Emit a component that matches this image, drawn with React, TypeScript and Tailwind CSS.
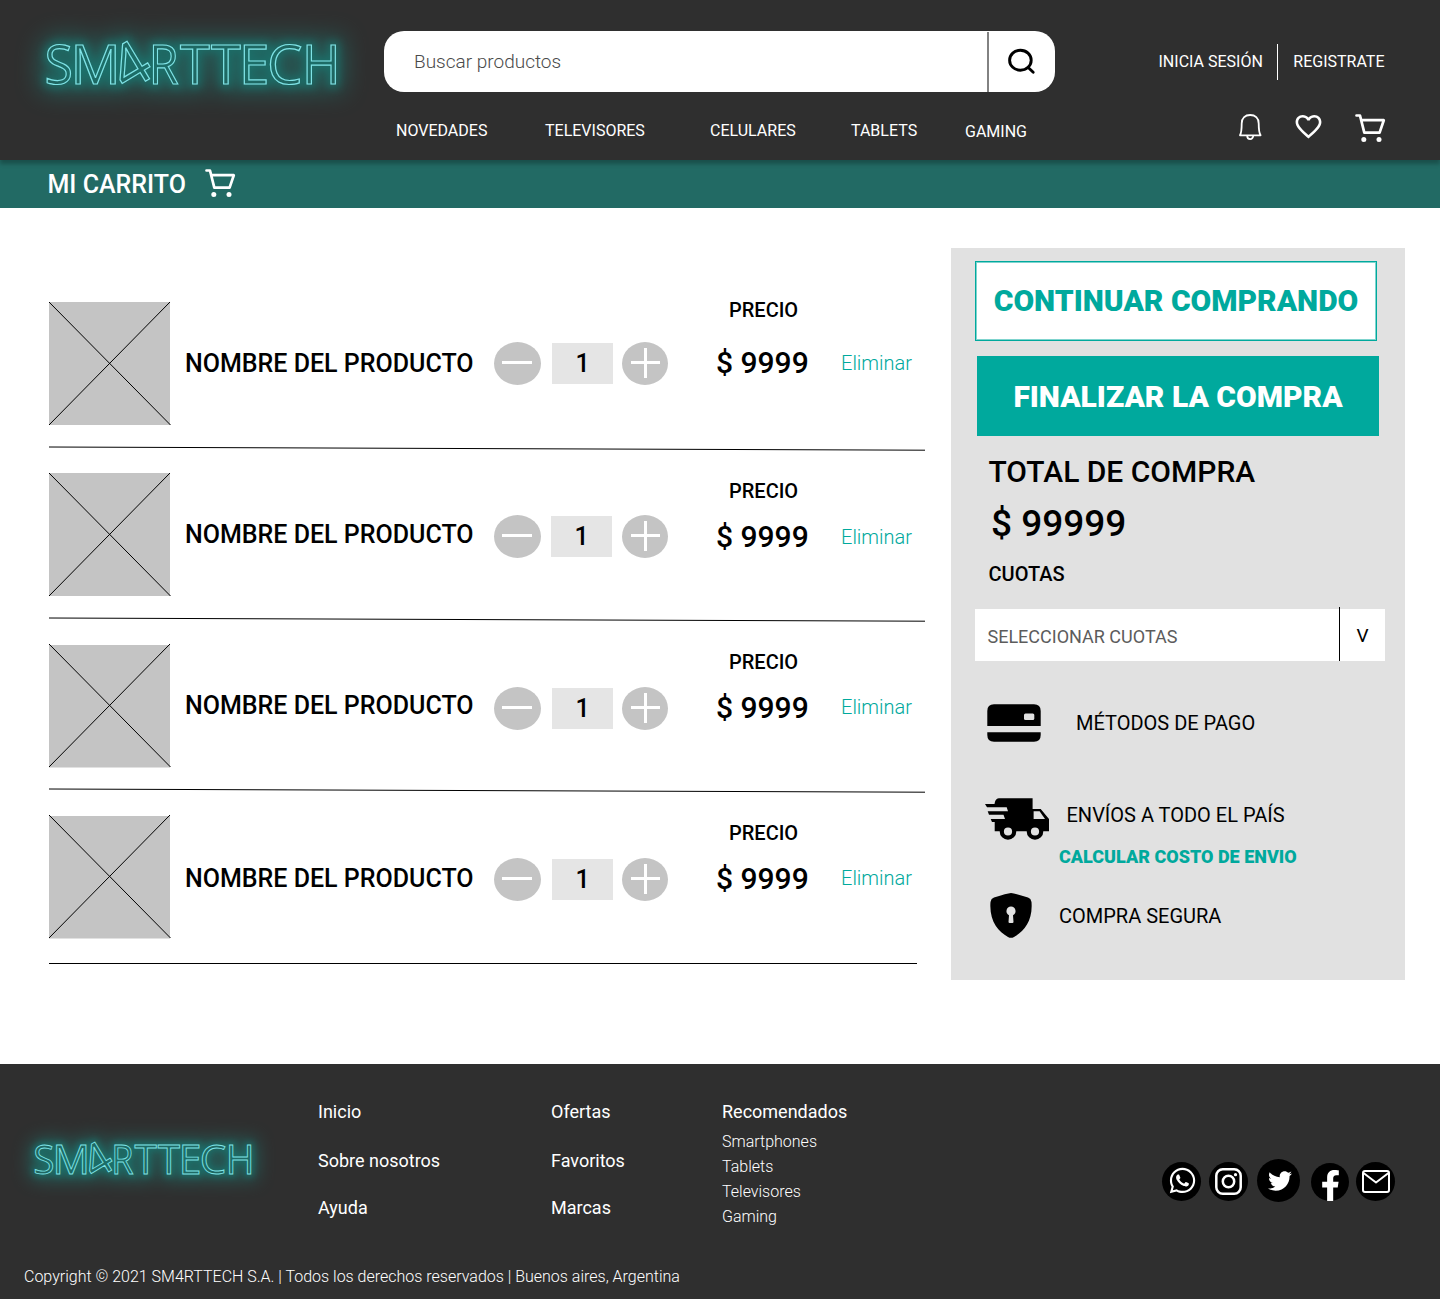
import { FaFacebookF, FaTwitter, FaWhatsapp } from "react-icons/fa";
import { MdFavoriteBorder } from "react-icons/md";

const LETTERS = [
  { ch: "S", size: 54.7, at: "translate(44.4 83.6) scale(0.95 1)" },
  { ch: "M", size: 54.7, at: "translate(70.4 83.6) scale(1.02 1)" },
  { ch: "4", size: 61, at: "translate(126.2 92.8) rotate(-31)" },
  { ch: "R", size: 54.7, at: "translate(148.8 83.6) scale(0.883 1)" },
  { ch: "T", size: 54.7, at: "translate(180 83.6) scale(0.99 1)" },
  { ch: "T", size: 54.7, at: "translate(211 83.6) scale(0.99 1)" },
  { ch: "E", size: 54.7, at: "translate(239.1 83.6)" },
  { ch: "C", size: 54.7, at: "translate(267.1 83.6) scale(1.03 1)" },
  { ch: "H", size: 54.7, at: "translate(302.1 83.6) scale(0.955 1)" },
];

function Letters() {
  return (
    <>
      {LETTERS.map((l, i) => (
        <text key={i} transform={l.at} fontSize={l.size} fontFamily="'Open Sans', sans-serif">
          {l.ch}
        </text>
      ))}
    </>
  );
}

function Logo({ className }: { className: string }) {
  return (
    <svg viewBox="0 0 384 128" className={`overflow-visible ${className}`} role="img" aria-label="SM4RTTECH">
      <g aria-hidden="true" fill="#1b8a82" stroke="#1b8a82" strokeWidth="16" opacity="0.5" className="[filter:blur(12px)]">
        <Letters />
      </g>
      <g aria-hidden="true" fill="#167d76" stroke="#167d76" strokeWidth="8" opacity="0.6" className="[filter:blur(4px)]">
        <Letters />
      </g>
      <g fill="none" stroke="#7fe3e6" strokeWidth="1.2">
        <Letters />
      </g>
    </svg>
  );
}

function CartIcon() {
  return (
    <svg width="31" height="29" viewBox="0 0 31 29" fill="none" stroke="#fff" strokeWidth="2.7" strokeLinecap="round" strokeLinejoin="round">
      <path d="M1.5 1.5H5L9.3 18.6H24.6L28.8 6.2H6.4" />
      <circle cx="8.8" cy="25.4" r="2.5" fill="#fff" stroke="none" />
      <circle cx="24" cy="25.4" r="2.5" fill="#fff" stroke="none" />
    </svg>
  );
}

function BellIcon() {
  return (
    <svg width="23" height="27" viewBox="0 0 23 27" fill="none" stroke="#fff" strokeWidth="1.8" strokeLinejoin="round">
      <path d="M1 21.3C2.6 18.5 2.7 15 2.7 9.5C2.7 4 6.3 1 11.2 1S19.7 4 19.7 9.5C19.7 15 19.8 18.5 21.6 21.3Z" />
      <path d="M8.2 21.8a3 3.3 0 0 0 6 0" />
    </svg>
  );
}

function Header() {
  return (
    <header className="relative z-10 flex h-40 bg-[#2f2f2f] text-base leading-5 text-white shadow-[0_4px_4px_rgba(0,0,0,0.25)]">
      <Logo className="h-32 w-96 shrink-0" />
      <div className="relative w-[671px] shrink-0 pt-[31px]">
        <div className="flex h-[61px] rounded-[20px] bg-white">
          <div className="w-[603px] pt-[19px] pl-[30px] text-[19px] leading-6 font-light text-[#4a4a4a]">Buscar productos</div>
          <div className="mt-px w-0.5 bg-[#828282]" />
          <svg width="28" height="27" viewBox="0 0 28 27" className="mt-[17px] ml-[19px]" fill="none" stroke="#000" strokeWidth="2.9" strokeLinecap="round">
            <ellipse cx="12.4" cy="12.2" rx="10.8" ry="10" />
            <path d="M20.2 19.5L25.2 24.2" />
          </svg>
        </div>
        <nav className="flex pt-[29px] pl-3 whitespace-nowrap">
          <span className="w-[149px]">NOVEDADES</span>
          <span className="w-[165px]">TELEVISORES</span>
          <span className="w-[141px]">CELULARES</span>
          <span className="w-[114px]">TABLETS</span>
          <span className="pt-px">GAMING</span>
        </nav>
      </div>
      <div className="ml-auto w-[282px] pt-11 pr-[54px]">
        <div className="flex h-9 items-center justify-end pr-[1.5px] whitespace-nowrap">
          <span className="pr-3.5">INICIA SESIÓN</span>
          <span className="mr-[15.5px] h-full w-px bg-white" />
          <span>REGISTRATE</span>
        </div>
        <div className="mt-[33.5px] flex items-start justify-end">
          <BellIcon />
          <MdFavoriteBorder size={31} className="-mt-[3px] ml-[31px]" />
          <div className="ml-[31px]">
            <CartIcon />
          </div>
        </div>
      </div>
    </header>
  );
}

type Row = {
  imageTop: number;
  name: string;
  qty: string;
  value: string;
  precio: string;
  price: string;
  remove: string;
};

const ROWS: Row[] = [
  { imageTop: 0, name: "mt-[47px]", qty: "mt-10", value: "mr-[9px] ml-[11px]", precio: "mt-[-7px]", price: "mt-[23px]", remove: "mt-[46px]" },
  { imageTop: 0, name: "mt-[47px]", qty: "mt-[42px]", value: "mr-2.5 ml-2.5", precio: "mt-[3px]", price: "mt-4", remove: "mt-[49px]" },
  { imageTop: 1, name: "mt-[47px]", qty: "mt-[43px]", value: "mr-[9px] ml-[11px]", precio: "mt-[3px]", price: "mt-4", remove: "mt-12" },
  { imageTop: 1, name: "mt-[49px]", qty: "mt-[43px]", value: "mr-[9px] ml-[11px]", precio: "mt-[3px]", price: "mt-4", remove: "mt-12" },
];

function ProductRow({ row, last }: { row: Row; last: boolean }) {
  return (
    <article className="relative h-[171px] w-[876px]">
      <div className="flex items-start whitespace-nowrap">
        <svg width="122" height="124" viewBox="0 0 122 124" className="shrink-0 overflow-visible">
          <rect y={row.imageTop} width="121" height={row.imageTop ? 122.5 : 123} fill="#c4c4c4" />
          <path d="M0 0L121.5 123M121 0L0 123" stroke="#000" strokeWidth="1" />
        </svg>
        <div className={`ml-3.5 w-[309px] text-[25px] leading-[30px] font-medium ${row.name}`}>NOMBRE DEL PRODUCTO</div>
        <Stepper row={row} />
        <div className="ml-[48px] w-[125px] font-medium">
          <div className={`pl-[13px] text-xl leading-[30px] ${row.precio}`}>PRECIO</div>
          <div className={`text-[30px] leading-[30px] ${row.price}`}>$ 9999</div>
        </div>
        <div className={`text-xl leading-[30px] font-light text-[#00a99d] ${row.remove}`}>Eliminar</div>
      </div>
      <svg width="876" height="6" viewBox="0 0 876 6" className="absolute top-[144px] left-0" stroke="#000">
        {last ? <path d="M0 4.5H868" /> : <path d="M0 1L876 4.2" />}
      </svg>
    </article>
  );
}

function Stepper({ row }: { row: Row }) {
  return (
    <div className={`flex w-[174px] shrink-0 items-start ${row.qty}`}>
      <svg width="47" height="43" viewBox="0 0 47 43">
        <ellipse cx="23.5" cy="21.5" rx="23.5" ry="21.5" fill="#c4c4c4" />
        <path d="M8 20.5H38" stroke="#fff" strokeWidth="3" />
      </svg>
      <div className={`mt-px h-[41px] w-[61px] bg-[#e5e5e5] text-center text-[25px] leading-[42px] font-medium ${row.value}`}>1</div>
      <svg width="46" height="43" viewBox="0 0 46 43">
        <ellipse cx="23" cy="21.5" rx="23" ry="21.5" fill="#c4c4c4" />
        <path d="M9 20.5H38M23.5 6V36" stroke="#fff" strokeWidth="3" />
      </svg>
    </div>
  );
}

function CardIcon() {
  return (
    <svg width="54" height="38" viewBox="0 0 54 38">
      <path d="M.3 22V7Q.3 .3 7 .3H47Q53.7 .3 53.7 7V22ZM.3 28.3H53.7V31Q53.7 37.8 47 37.8H7Q.3 37.8 .3 31Z" />
      <rect x="37" y="9.5" width="10.3" height="6.5" rx="1.5" fill="#e1e1e1" />
    </svg>
  );
}

function TruckIcon() {
  return (
    <svg width="64" height="42" viewBox="0 0 64 42">
      <path d="M14 .3H47.6V11H55.7L64 21V33.3H9.7V24H7L5.7 21H20L18.5 16.7H4L2.7 13.3H23L21.7 9.3H2L0 6H9.5L10 3.8Q11 .3 14 .3Z" />
      <path d="M48.6 13.2H54.6L60 21H48.6Z" fill="#e1e1e1" />
      <circle cx="23" cy="33.5" r="6.2" fill="#e1e1e1" stroke="#000" strokeWidth="4.2" />
      <circle cx="50" cy="33.5" r="6.2" fill="#e1e1e1" stroke="#000" strokeWidth="4.2" />
    </svg>
  );
}

function ShieldIcon() {
  return (
    <svg width="42" height="45" viewBox="0 0 42 45">
      <path d="M21 0Q25 .3 38 4.6Q41 5.6 41.5 9C43 28 34 38.5 24 44Q21 45.7 18 44C8 38.5 -1 28 .5 9Q1 5.6 4 4.6Q17 .3 21 0Z" />
      <path d="M21 13.5a4.6 4.6 0 0 1 2 8.7L23.5 29Q23.4 30 22.4 30H19.6Q18.6 30 18.5 29L19 22.2a4.6 4.6 0 0 1 2-8.7Z" fill="#e1e1e1" />
    </svg>
  );
}

function Summary() {
  return (
    <aside className="h-[732px] w-[454px] shrink-0 bg-[#e1e1e1] whitespace-nowrap">
      <div className="mt-[13px] ml-6 h-20 w-[402px] border border-[#00a99d] bg-white text-center text-[30px] leading-[77px] font-black text-[#00a99d] shadow-[inset_0_0_0_1px_rgba(0,169,157,0.5)]">
        CONTINUAR COMPRANDO
      </div>
      <div className="mt-[15px] ml-[26px] h-20 w-[402px] bg-[#00a99d] text-center text-[30px] leading-[81px] font-black text-white">
        FINALIZAR LA COMPRA
      </div>
      <div className="mt-[18px] ml-[37.5px] text-[30px] leading-9 font-medium">TOTAL DE COMPRA</div>
      <div className="mt-3 ml-10 text-[37px] leading-11 font-medium">$ 99999</div>
      <div className="mt-4 ml-[37.5px] text-xl leading-6 font-medium">CUOTAS</div>
      <div className="mt-[21px] ml-6 flex h-[54px] w-[410px] items-end">
        <div className="h-[52px] w-[364px] bg-white pt-px pl-[12.5px] text-lg leading-[54px] text-[#5c5c5c]">SELECCIONAR CUOTAS</div>
        <div className="h-full w-px bg-black" />
        <div className="h-[52px] w-[45px] bg-white text-center text-[19px] leading-[53px]">V</div>
      </div>
      <div className="mt-[43px] ml-9 flex text-xl leading-[38px]">
        <CardIcon />
        <span className="ml-[35px]">MÉTODOS DE PAGO</span>
      </div>
      <div className="mt-14 ml-[34px] flex text-xl">
        <TruckIcon />
        <div className="ml-[10px]">
          <div className="pt-1 pl-[7.5px] leading-[26px]">ENVÍOS A TODO EL PAÍS</div>
          <div className="mt-4 text-lg leading-[26px] font-black text-[#00a99d]">CALCULAR COSTO DE ENVIO</div>
        </div>
      </div>
      <div className="mt-[23px] ml-[39px] flex text-xl leading-[46px]">
        <ShieldIcon />
        <span className="ml-[27px]">COMPRA SEGURA</span>
      </div>
    </aside>
  );
}

function Footer() {
  return (
    <footer className="h-[235px] bg-[#2f2f2f] text-lg leading-6 whitespace-nowrap text-white">
      <div className="flex h-[200px]">
        <Logo className="mt-[46.5px] h-24 w-[287px] shrink-0" />
        <div className="relative ml-[31px] w-[233px] pt-9">
          <div>Inicio</div>
          <div className="mt-[25px]">Sobre nosotros</div>
          <div className="mt-[23px]">Ayuda</div>
        </div>
        <div className="w-[171px] pt-9">
          <div>Ofertas</div>
          <div className="mt-[25px]">Favoritos</div>
          <div className="mt-[23px]">Marcas</div>
        </div>
        <div className="w-[200px] pt-9">
          <div>Recomendados</div>
          <div className="mt-[5px] text-base leading-[25px] font-light">
            <div>Smartphones</div>
            <div>Tablets</div>
            <div>Televisores</div>
            <div>Gaming</div>
          </div>
        </div>
        <div className="ml-auto flex items-start pt-[95px] pr-[45px]">
          <span className="mt-[3px] flex size-[39px] items-center justify-center rounded-full bg-black">
            <FaWhatsapp size={29} className="mb-[3px] ml-px" />
          </span>
          <span className="mt-[3px] ml-2 flex size-[39px] items-center justify-center rounded-full bg-black">
            <svg width="27" height="27" viewBox="0 0 27 27" fill="none" stroke="#fff" strokeWidth="2.5">
              <rect x="1.3" y="1.3" width="24.4" height="24.4" rx="6.5" />
              <circle cx="13.5" cy="13.5" r="5.7" />
              <circle cx="20.5" cy="6.7" r="1.6" fill="#fff" stroke="none" />
            </svg>
          </span>
          <span className="ml-[9px] flex size-[43px] items-center justify-center rounded-full bg-black">
            <FaTwitter size={24} className="ml-0.5" />
          </span>
          <span className="mt-1 ml-[11px] flex size-[38px] items-end justify-center rounded-full bg-black">
            <FaFacebookF size={31} className="ml-px" />
          </span>
          <span className="mt-[3px] ml-[7px] flex size-[39px] items-center justify-center rounded-full bg-black">
            <svg width="28" height="23" viewBox="0 0 28 23" fill="none" stroke="#fff" strokeWidth="2" strokeLinejoin="round">
              <rect x="1" y="1" width="26" height="21" rx="2" />
              <path d="M1.5 3L14 12.5L26.5 3" />
            </svg>
          </span>
        </div>
      </div>
      <div className="pl-6 text-base leading-[26px] font-light">Copyright © 2021 SM4RTTECH S.A. | Todos los derechos reservados | Buenos aires, Argentina</div>
    </footer>
  );
}

export default function App() {
  return (
    <div className="h-[1299px] w-[1440px] overflow-hidden bg-white font-['Roboto',sans-serif] text-black">
      <Header />
      <div className="flex h-12 items-start bg-[#226a64] pt-[9px] pl-[47.5px] text-white">
        <h1 className="w-[157.5px] text-[25px] leading-[31px] font-medium whitespace-nowrap">MI CARRITO</h1>
        <CartIcon />
      </div>
      <main className="flex h-[856px] pt-10 pl-[49px]">
        <section className="w-[902px] shrink-0 pt-[54px]">
          {ROWS.map((row, i) => (
            <ProductRow key={i} row={row} last={i === ROWS.length - 1} />
          ))}
        </section>
        <Summary />
      </main>
      <Footer />
    </div>
  );
}
